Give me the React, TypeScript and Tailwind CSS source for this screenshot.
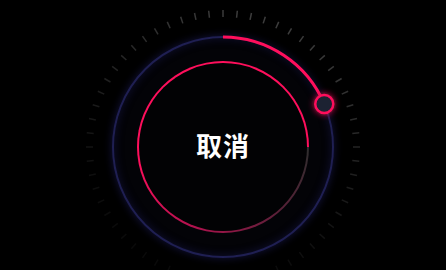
const PINK = "#ff0f5c";
const CX = 140;
const CY = 140;

const ticks = Array.from({ length: 60 }, (_, i) => {
  const deg = i * 6;
  const a = (deg * Math.PI) / 180;
  const t = (1 + Math.cos(a - (20 * Math.PI) / 180)) / 2;
  const alpha = 0.04 + 0.2 * Math.pow(t, 1.6);
  return {
    x1: CX + 130 * Math.sin(a),
    y1: CY - 130 * Math.cos(a),
    x2: CX + 137 * Math.sin(a),
    y2: CY - 137 * Math.cos(a),
    alpha,
  };
});

const knobDeg = 67;
const ka = (knobDeg * Math.PI) / 180;
const kx = CX + 110 * Math.sin(ka);
const ky = CY - 110 * Math.cos(ka);

const Dial = () => {
  return (
    <div className="relative w-[280px] h-[280px] flex items-center justify-center">
      {/* outer track */}
      <div className="w-[222px] h-[222px] rounded-full border-2 border-[#1f1f52] bg-[#030307] shadow-[0_0_9px_rgba(32,32,100,0.6),inset_0_0_10px_rgba(32,32,100,0.45)] flex items-center justify-center">
        {/* inner ring */}
        <div className="w-[172px] h-[172px] rounded-full p-[2px] bg-[conic-gradient(from_90deg,#2e2e2e_0deg,#5a2038_50deg,#b0124e_110deg,#ff0f5c_170deg,#ff0f5c_360deg)]">
          <div className="w-full h-full rounded-full bg-[#020204] flex items-center justify-center">
            <span className="text-white text-[26px] font-bold leading-none tracking-[1px] -mt-[4px] font-['Noto_Sans_CJK_SC','Noto_Sans',sans-serif]">
              取消
            </span>
          </div>
        </div>
      </div>

      {/* ticks, progress arc and knob */}
      <svg className="absolute inset-0 pointer-events-none" width="280" height="280" viewBox="0 0 280 280">
        <defs>
          <filter id="glow" x="-60%" y="-60%" width="220%" height="220%">
            <feGaussianBlur stdDeviation="3" result="b" />
            <feMerge>
              <feMergeNode in="b" />
              <feMergeNode in="SourceGraphic" />
            </feMerge>
          </filter>
        </defs>
        {ticks.map((t, i) => (
          <line
            key={i}
            x1={t.x1}
            y1={t.y1}
            x2={t.x2}
            y2={t.y2}
            stroke="#ffffff"
            strokeOpacity={t.alpha}
            strokeWidth="1.5"
          />
        ))}
        <path
          d={`M ${CX} ${CY - 110} A 110 110 0 0 1 ${kx} ${ky}`}
          fill="none"
          stroke={PINK}
          strokeWidth="3"
        />
        <circle cx={kx} cy={ky} r="9" fill="#1b2033" stroke={PINK} strokeWidth="2.5" filter="url(#glow)" />
      </svg>
    </div>
  );
}

export default function App() {
  return (
    <div className="w-full h-[270px] bg-black overflow-hidden flex justify-center pt-[7px]">
      <Dial />
    </div>
  );
}
